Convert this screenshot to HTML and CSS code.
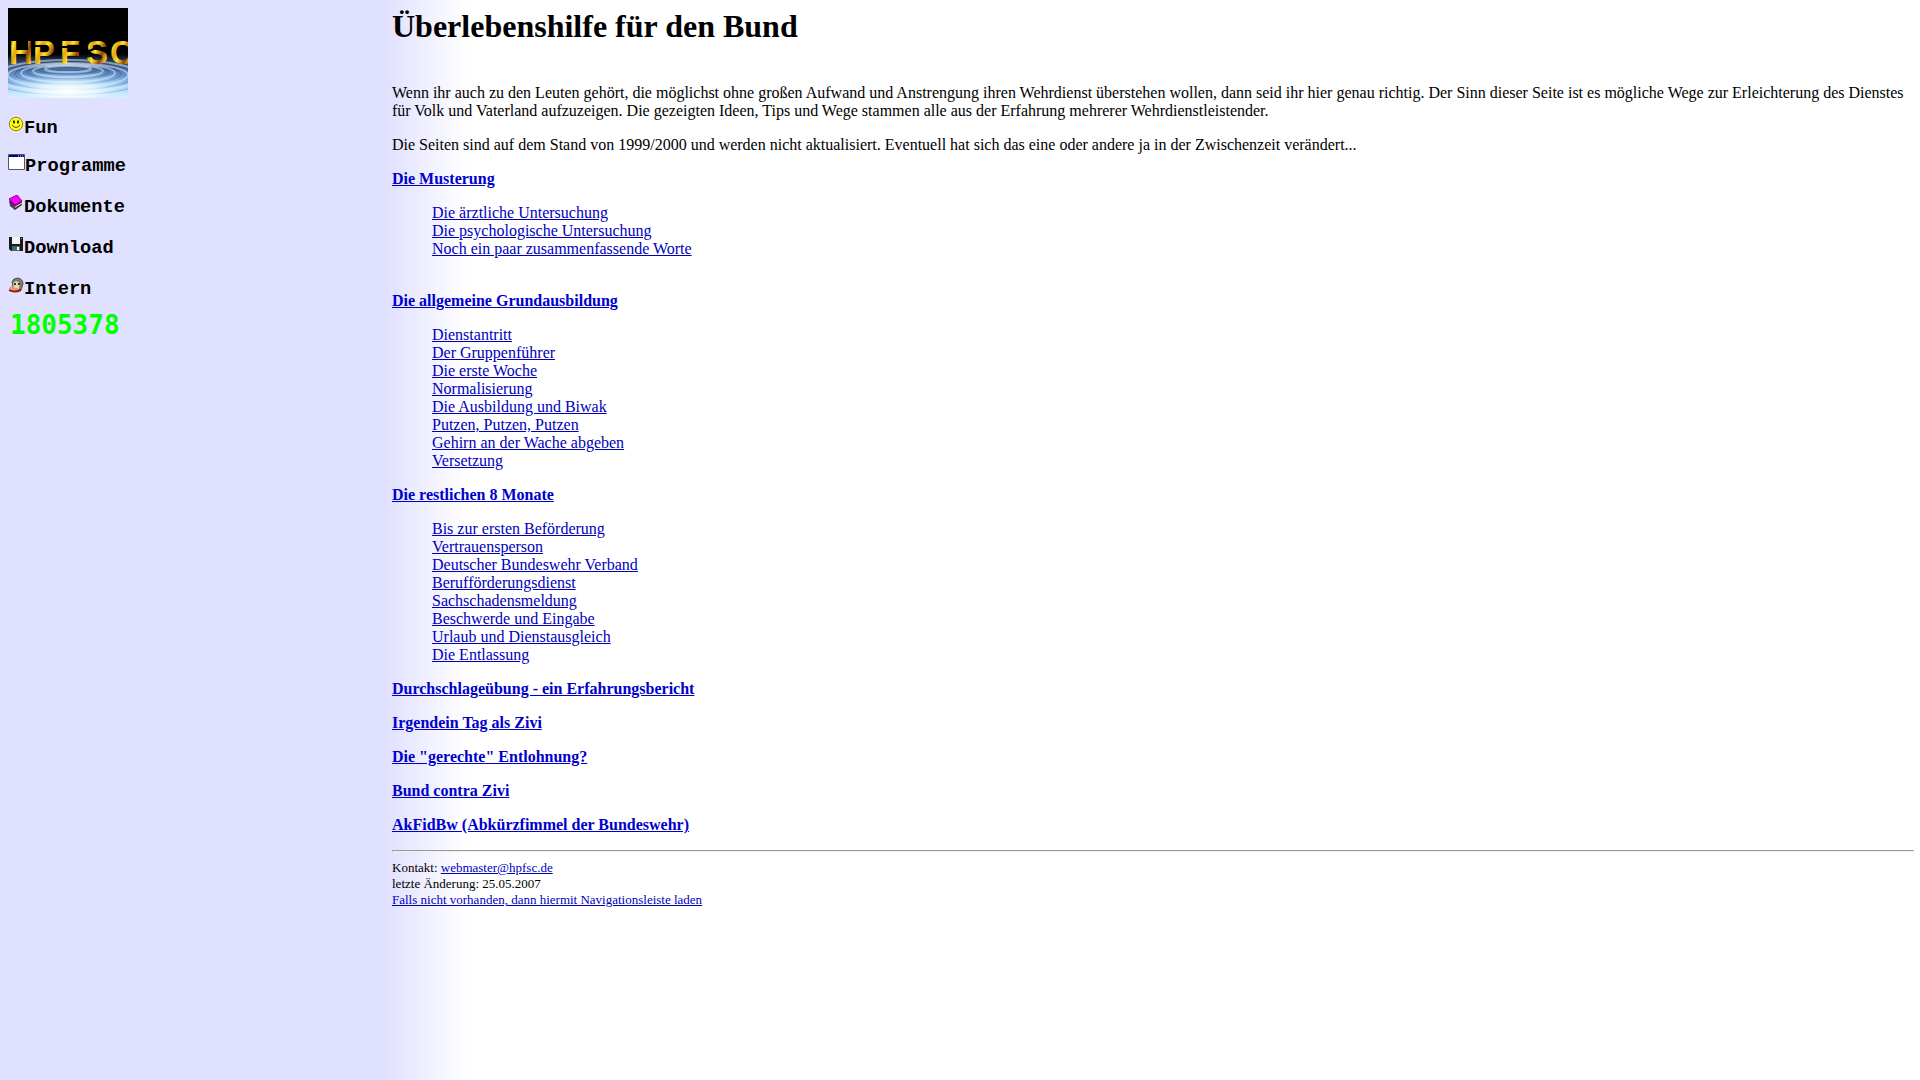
FILE: index.html
```html
<!DOCTYPE html>
<html lang="de">
<head>
<meta charset="utf-8">
<title>Überlebenshilfe für den Bund</title>
<link rel="stylesheet" href="styles.css">
</head>
<body>
<nav class="sidebar">
  <svg class="logo" viewBox="0 0 120 90" role="img" aria-label="HPFSC">
    <defs>
      <linearGradient id="water" x1="0" y1="0" x2="0" y2="1">
        <stop offset="0" stop-color="#000"/><stop offset=".2" stop-color="#30486c"/>
        <stop offset=".45" stop-color="#5f8cc2"/><stop offset=".75" stop-color="#a9d3f8"/><stop offset="1" stop-color="#e4f5ff"/>
      </linearGradient>
      <radialGradient id="glow" cx=".5" cy=".8" r=".6">
        <stop offset="0" stop-color="#fff"/><stop offset=".4" stop-color="#eafaff" stop-opacity=".8"/><stop offset="1" stop-color="#9cd4ff" stop-opacity="0"/>
      </radialGradient>
      <linearGradient id="gold" gradientUnits="userSpaceOnUse" x1="0" y1="30" x2="11" y2="34" spreadMethod="reflect">
        <stop offset="0" stop-color="#8b4506"/><stop offset=".25" stop-color="#c98a12"/><stop offset=".6" stop-color="#ffe62b"/><stop offset="1" stop-color="#e3a513"/>
      </linearGradient>
      <clipPath id="cut"><path d="M0 0H11V90H0zM11 42H20V90H11zM20 0H120V90H20z"/></clipPath>
    </defs>
    <rect width="120" height="90"/>
    <rect y="46" width="120" height="44" fill="url(#water)"/>
    <g fill="none" stroke="#284d91" stroke-opacity=".5">
      <ellipse cx="60" cy="61" rx="17" ry="2"/><ellipse cx="60" cy="62" rx="29" ry="4"/>
      <ellipse cx="60" cy="64" rx="41" ry="7"/><ellipse cx="60" cy="66" rx="53" ry="10"/>
      <ellipse cx="60" cy="68" rx="66" ry="14"/><ellipse cx="60" cy="69" rx="80" ry="18"/>
    </g>
    <g fill="none" stroke="#e9f8ff" stroke-opacity=".5" stroke-width="2">
      <ellipse cx="60" cy="61" rx="23" ry="3"/><ellipse cx="60" cy="63" rx="35" ry="6"/>
      <ellipse cx="60" cy="65" rx="47" ry="9"/><ellipse cx="60" cy="67" rx="60" ry="12"/>
      <ellipse cx="60" cy="68" rx="73" ry="16"/>
    </g>
    <rect y="56" width="120" height="34" fill="url(#glow)"/>
    <text class="logo-text" x="1 25 52 78 102" y="56" fill="url(#gold)" clip-path="url(#cut)">HPFSC</text>
    <path d="M26 38h9M53 39h18M79 44l9-4" stroke="#000" stroke-width="2"/>
  </svg>
  <h3><a href="#fun"><svg class="icon" viewBox="0 0 16 16" aria-hidden="true"><circle cx="8" cy="8" r="6.7" fill="#ff1" stroke="#938600"/><ellipse cx="6" cy="6" rx=".9" ry="1.7"/><ellipse cx="10" cy="6" rx=".9" ry="1.7"/><path d="M4 9q4 5 8 0" fill="none" stroke="#574b00"/></svg>Fun</a></h3>
  <h3><a href="#programme"><svg class="icon icon-wide" viewBox="0 0 17 16" aria-hidden="true"><path d="M.5.5h16v15H.5z" fill="#fff" stroke="#555"/><path d="M1 1h15v2H1z" fill="#008"/><path d="M10 2h1m1 0h1m1 0h1" stroke="#ddd"/></svg>Programme</a></h3>
  <h3><a href="#dokumente"><svg class="icon" viewBox="0 0 16 16" aria-hidden="true"><path d="M1 5l1 6 5 4 7-5V5L7 8z" fill="#373047"/><path d="M2 9l5 4 7-5" fill="none" stroke="#a73a64"/><path d="M7 12l7-4" stroke="#ddd"/><path d="M1 4l8-4 5 6-7 4z" fill="#f0f" stroke="#8d0090"/></svg>Dokumente</a></h3>
  <h3><a href="#download"><svg class="icon" viewBox="0 0 16 16" aria-hidden="true"><path d="M1 1h14v14H3l-2-2z" fill="#161c1d"/><path d="M4 1h8v7H4z" fill="#f4f4f4"/><path d="M4 10h8v5H4z" fill="#456a6d"/><path d="M9 11h2v3H9z" fill="#fff"/><path d="M13 2h1v1h-1z" fill="#bbb"/></svg>Download</a></h3>
  <h3><a href="#intern"><svg class="icon" viewBox="0 0 16 16" aria-hidden="true"><path d="M4 5q1-4 6-4 5 1 5 6l-2 6-8-3z" fill="#777a75" stroke="#55544b"/><path d="M5 6l3-2 4 2-1 6-5-1z" fill="#ead6a2"/><path d="M6 6h2v2H6zm4 0h2v2h-2z" fill="#333"/><path d="M5 9q-3 0-4 3l3 2 8-1-5-2z" fill="#dd9d75"/><path d="M1 13q5 3 12 0" fill="none" stroke="#a31313" stroke-width="2"/></svg>Intern</a></h3>
  <div class="counter">1805378</div>
</nav>
<main class="content">
  <h1>Überlebenshilfe für den Bund</h1>
  <p>Wenn ihr auch zu den Leuten gehört, die möglichst ohne großen Aufwand und Anstrengung ihren Wehrdienst überstehen wollen, dann seid ihr hier genau richtig. Der Sinn dieser Seite ist es mögliche Wege zur Erleichterung des Dienstes für Volk und Vaterland aufzuzeigen. Die gezeigten Ideen, Tips und Wege stammen alle aus der Erfahrung mehrerer Wehrdienstleistender.</p>
  <p>Die Seiten sind auf dem Stand von 1999/2000 und werden nicht aktualisiert. Eventuell hat sich das eine oder andere ja in der Zwischenzeit verändert...</p>
  <p class="topic"><a href="#musterung">Die Musterung</a></p>
  <ul class="chapters chapters-last">
    <li><a href="#arzt">Die ärztliche Untersuchung</a></li>
    <li><a href="#psycho">Die psychologische Untersuchung</a></li>
    <li><a href="#worte">Noch ein paar zusammenfassende Worte</a></li>
  </ul>
  <p class="topic"><a href="#aga">Die allgemeine Grundausbildung</a></p>
  <ul class="chapters">
    <li><a href="#dienstantritt">Dienstantritt</a></li>
    <li><a href="#gruppenfuehrer">Der Gruppenführer</a></li>
    <li><a href="#woche">Die erste Woche</a></li>
    <li><a href="#normal">Normalisierung</a></li>
    <li><a href="#biwak">Die Ausbildung und Biwak</a></li>
    <li><a href="#putzen">Putzen, Putzen, Putzen</a></li>
    <li><a href="#wache">Gehirn an der Wache abgeben</a></li>
    <li><a href="#versetzung">Versetzung</a></li>
  </ul>
  <p class="topic"><a href="#rest">Die restlichen 8 Monate</a></p>
  <ul class="chapters">
    <li><a href="#befoerderung">Bis zur ersten Beförderung</a></li>
    <li><a href="#vertrauen">Vertrauensperson</a></li>
    <li><a href="#verband">Deutscher Bundeswehr Verband</a></li>
    <li><a href="#bfd">Berufförderungsdienst</a></li>
    <li><a href="#schaden">Sachschadensmeldung</a></li>
    <li><a href="#beschwerde">Beschwerde und Eingabe</a></li>
    <li><a href="#urlaub">Urlaub und Dienstausgleich</a></li>
    <li><a href="#entlassung">Die Entlassung</a></li>
  </ul>
  <p class="topic"><a href="#durchschlag">Durchschlageübung - ein Erfahrungsbericht</a></p>
  <p class="topic"><a href="#zivitag">Irgendein Tag als Zivi</a></p>
  <p class="topic"><a href="#entlohnung">Die "gerechte" Entlohnung?</a></p>
  <p class="topic"><a href="#contra">Bund contra Zivi</a></p>
  <p class="topic"><a href="#akfidbw">AkFidBw (Abkürzfimmel der Bundeswehr)</a></p>
  <hr>
  <footer>
    Kontakt: <a href="mailto:webmaster@hpfsc.de">webmaster@hpfsc.de</a><br>
    letzte Änderung: 25.05.2007<br>
    <a href="#navigation">Falls nicht vorhanden, dann hiermit Navigationsleiste laden</a>
  </footer>
</main>
</body>
</html>
```
FILE: styles.css
```css
body {
  display: flex;
  min-height: 100vh;
  margin: 0;
  font: 16px/18px "Liberation Serif", "Times New Roman", serif;
  color: #000;
}

.sidebar,
.content {
  box-sizing: border-box;
  padding: 8px;
}

.sidebar {
  flex: 0 0 20%;
  background: #e0e0ff;
}

.content {
  flex: 1;
  min-width: 0;
  padding-right: 6px;
  background: linear-gradient(to right, #e0e0ff, #fff 84px);
}

.logo {
  display: block;
  width: 120px;
  height: 90px;
}

.logo-text {
  font: bold 33px "Liberation Sans", Arial, sans-serif;
}

.sidebar h3 {
  margin: 0 0 17px;
  font-family: "Liberation Mono", "Courier New", monospace;
  line-height: 24px;
}

.sidebar h3:first-of-type {
  margin: 18px 0 14px;
}

.sidebar h3 a {
  display: flex;
  align-items: flex-start;
  color: #000;
  text-decoration: none;
}

.icon {
  width: 16px;
  height: 16px;
}

.icon-wide {
  width: 17px;
}

.counter {
  padding-left: 2px;
  font: bold 26px/14px "DejaVu Sans Mono", monospace;
  color: #0f0;
}

h1 {
  margin: 0 0 39px;
  font-size: 32px;
  line-height: 37px;
}

p,
.chapters {
  margin: 16px 0;
}

.content a {
  color: #0000bb;
}

.content .topic a {
  color: #0000cc;
}

.topic {
  font-weight: bold;
}

.chapters {
  padding-left: 40px;
  list-style: none;
}

.chapters-last {
  margin-bottom: 34px;
}

hr {
  margin: 16px 0 8px;
}

footer {
  font-size: 13px;
  line-height: 16px;
}
```
